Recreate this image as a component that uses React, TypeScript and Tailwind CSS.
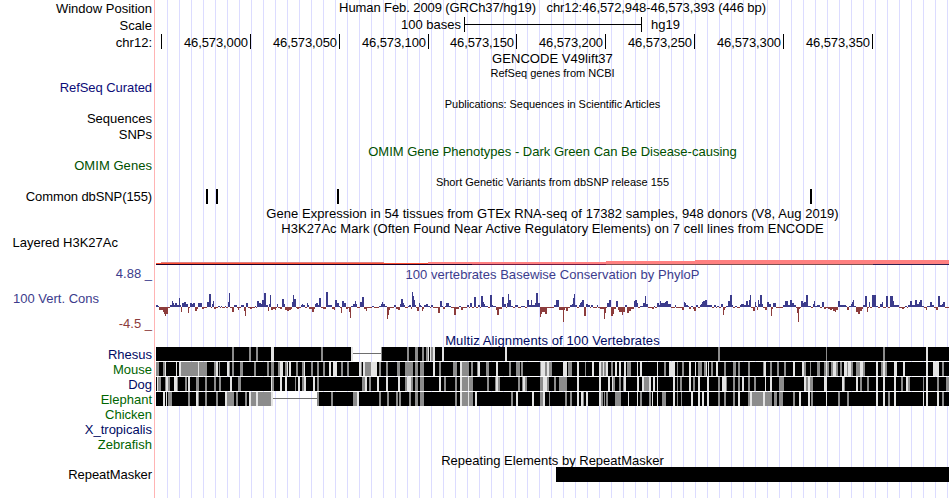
import React from 'react';

// Every track is drawn in window pixels, up to this x
const TRACK_END = 949;

const labels = [
    { name: 'Window Position', className: 'mt-px text-black' },
    { name: 'Scale', className: 'mt-[2px] text-black' },
    { name: 'chr12:', className: 'mt-[2px] text-black' },
    { name: 'RefSeq Curated', className: 'mt-[30px] tracking-[-0.07px] text-[#0c0c78]' },
    { name: 'Sequences', className: 'mt-4 text-black' },
    { name: 'SNPs', className: 'mt-px text-black' },
    { name: 'OMIM Genes', className: 'mt-4 tracking-[0.05px] text-[#005000]' },
    { name: 'Common dbSNP(155)', className: 'mt-4 tracking-[-0.1px] text-black' },
    { name: 'Layered H3K27Ac', className: 'mt-[31px] pr-[34px] text-black' },
    { name: '4.88 _', className: 'mt-4 text-[#3c3c8c]' },
    { name: '100 Vert. Cons', className: 'mt-[10px] pr-[53px] text-[#3c3c8c]' },
    { name: '-4.5 _', className: 'mt-[10px] text-[#8c3c3c]' },
    { name: 'Rhesus', className: 'mt-4 text-[#000a64]' },
    { name: 'Mouse', className: 'text-[#006400]' },
    { name: 'Dog', className: 'text-[#000a64]' },
    { name: 'Elephant', className: 'text-[#006400]' },
    { name: 'Chicken', className: 'text-[#006400]' },
    { name: 'X_tropicalis', className: 'text-[#000a64]' },
    { name: 'Zebrafish', className: 'text-[#006400]' },
    { name: 'RepeatMasker', className: 'mt-[15px] tracking-[-0.07px] text-black' },
];

const ruler = [
    { label: '46,573,000', className: 'w-[89px]' },
    { label: '46,573,050', className: 'w-[89px]' },
    { label: '46,573,100', className: 'w-[89px]' },
    { label: '46,573,150', className: 'w-[88px]' },
    { label: '46,573,200', className: 'w-[89px]' },
    { label: '46,573,250', className: 'w-[89px]' },
    { label: '46,573,300', className: 'w-[89px]' },
    { label: '46,573,350', className: 'w-[89px]' },
];

const snps = [206, 216, 337, 810];

// "x height" steps; a height holds until the next x, negative goes below zero
const phyloP = `156 2,158 1,159 -3,163 -5,164 -7,165 -9,166 -7,168 -1,170 2,172 6,173 4,174 2,175 4,177 2,179 9,180 2,181 -5,
182 4,184 5,186 3,188 -6,189 -1,190 4,192 3,193 4,195 -4,197 -2,198 4,202 -2,204 -1,207 5,209 13,211 -1,212 3,213 6,214 -2,
216 -1,218 1,220 -1,221 1,222 -1,225 1,226 -1,228 5,229 14,230 -1,232 -5,234 2,237 -1,238 -3,239 -1,241 2,244 -4,245 -9,
246 4,248 -1,250 -2,252 -1,255 1,256 -1,257 6,259 4,261 3,262 7,264 14,266 2,268 -4,269 3,270 12,271 -3,273 -2,275 -3,
276 -1,277 3,278 -1,280 -2,282 8,284 3,285 -3,287 -4,289 -3,291 -2,292 5,293 12,294 8,296 -1,297 -2,299 -1,301 2,302 3,
303 2,305 -1,307 4,308 2,309 -2,312 -5,314 -2,315 3,316 4,318 2,319 9,321 -1,323 -2,326 15,328 2,332 -2,334 -3,335 7,
337 4,339 1,340 -1,341 -6,342 6,344 4,346 -2,348 -1,349 -5,350 -11,351 1,353 3,355 6,356 3,357 -1,360 5,362 10,364 -2,
366 -4,367 -1,372 1,374 -1,379 1,381 3,382 5,383 3,385 1,387 -12,388 -8,389 -3,390 -1,394 2,396 -2,398 -3,400 3,401 8,
403 4,404 2,405 -1,408 1,409 2,411 -2,412 15,413 11,414 7,415 2,416 -1,417 -4,419 4,420 2,421 1,422 -4,423 -2,424 2,426 3,
428 1,430 -1,431 2,433 -1,438 -6,440 6,442 1,443 -2,445 1,446 4,449 1,451 -1,454 -8,456 -2,459 1,461 -3,463 -1,467 2,
469 -1,470 4,472 -1,474 10,476 -1,478 2,480 -1,481 11,483 5,484 3,485 1,488 -1,490 12,492 2,493 1,496 -3,497 -8,499 -2,
502 10,504 3,506 -1,507 4,508 13,509 7,511 1,513 -1,515 2,518 -1,521 1,525 -1,527 7,529 2,531 7,532 2,535 4,536 14,538 4,
540 -10,541 -7,542 -5,545 -7,547 -1,554 2,556 7,559 -3,563 -15,564 -3,565 -1,566 -4,568 -1,570 2,572 3,573 9,574 13,575 2,
577 -1,579 2,580 4,581 5,582 7,584 -9,586 3,588 2,590 -1,591 2,593 -1,597 2,598 -1,600 -2,604 -12,605 -6,606 -1,607 4,
609 7,611 -9,613 -7,614 -2,616 6,618 -3,619 -5,622 -8,623 -5,625 2,627 -6,629 -4,631 -2,634 6,635 7,637 4,638 -1,640 1,
643 4,645 11,646 3,648 -1,652 -2,654 1,655 -1,657 4,659 2,660 6,661 4,665 5,666 6,668 3,671 -1,675 2,676 -1,680 -1,682 -3,
684 5,685 4,686 2,688 1,689 -2,691 1,693 -2,694 -4,696 2,698 -1,700 2,701 3,702 5,703 6,705 7,707 2,712 -1,714 2,716 -1,
717 1,719 -1,721 3,723 -8,724 -3,725 -1,726 1,728 6,730 12,732 2,733 -1,735 1,737 -1,740 2,741 3,744 2,746 6,748 2,749 7,
750 12,751 -1,753 -4,755 5,756 1,757 -3,758 7,759 3,760 12,762 3,763 -1,765 -3,767 5,769 3,771 -9,772 -2,773 4,776 -1,
783 2,785 6,788 2,790 7,792 4,794 2,796 -1,797 -6,798 -15,799 -2,800 -1,801 6,803 4,804 5,806 12,808 1,811 -1,813 3,814 6,
815 1,817 2,820 -1,822 5,824 -2,826 -1,828 -2,830 -3,832 -2,833 -4,835 -5,836 -3,838 6,840 2,846 1,847 -3,849 1,851 3,
852 5,853 7,854 1,856 -5,858 -7,860 -4,862 -2,863 2,865 11,867 -5,868 -1,869 5,870 -1,872 12,876 1,878 -1,880 3,882 5,
883 -1,886 11,888 -1,890 11,893 6,894 2,899 -1,902 -2,904 -1,905 1,907 -1,908 2,910 6,912 2,915 7,917 3,919 5,920 7,922 1,
924 -1,926 -3,927 1,930 5,932 2,934 -1,936 -3,938 11,940 2,942 3,943 5,945 -1`;

// b = black, g = gray, w = light, _ = unaligned stretch; followed by x and width
const alignments = [
    `b156 197,g232 2,g249 2,g256 2,w271 3,g321 2,w351 2,_353 28,b381 568,g381 1,g407 2,g415 3,g422 2,g426 2,w428 1,w430 1,
    g431 2,w433 2,w442 2,w505 2,g718 2,g826 1,g883 2,w926 2`,
    `b156 793,g156 3,g163 2,w165 1,w176 1,w179 2,g181 26,w198 1,g214 2,w216 2,g219 1,w227 2,g229 1,g232 2,g240 3,g254 2,
    g267 2,g271 3,g278 2,w280 3,g285 2,w287 1,w289 2,g296 2,g302 2,w304 1,g311 2,g317 2,g323 2,w329 2,w333 4,g341 2,g347 2,
    w359 2,g361 1,w363 2,g365 6,w371 6,g379 2,g386 2,g397 3,g405 8,g415 3,g420 4,w433 2,g439 2,g453 4,w460 2,g462 7,g471 2,
    g477 1,w478 2,g486 3,w496 2,g509 2,g516 4,g521 2,g540 1,w541 4,g545 2,w547 2,g549 3,w563 4,g568 4,w577 2,g585 1,w592 2,
    w599 2,g601 2,w603 1,g604 2,w606 2,g611 2,w615 2,w619 2,w624 2,g627 4,w637 1,w640 2,w657 1,g664 2,w669 6,g677 1,g682 2,
    w689 2,w695 1,g698 4,g704 2,w706 1,w708 1,g711 2,w716 2,g724 2,g733 3,g738 2,g748 2,g763 1,w764 2,g770 2,g777 2,g784 2,
    w793 2,w802 2,g804 2,g810 1,g817 3,g824 2,w826 1,g827 2,g831 2,w833 3,g836 2,g840 2,w844 3,g847 1,w848 3,g851 2,g856 4,
    w860 3,g863 2,w876 2,g881 2,w883 2,g885 2,w894 3,w903 2,w926 2,w933 6,g942 2`,
    `b156 793,w157 1,g158 3,g165 1,w166 2,g168 2,w174 3,g177 1,g185 2,w188 2,g196 3,g205 2,g214 2,g219 2,w230 2,g238 3,
    w271 1,g272 2,w280 2,w285 2,g295 1,w298 2,g302 2,w304 2,w313 2,g317 2,g362 3,w365 2,g369 2,w377 2,w386 2,w398 2,g405 2,
    w407 4,g411 2,g415 3,g420 4,w439 2,g444 2,g455 2,w460 2,g462 6,w468 1,g469 4,g487 2,g495 1,w496 2,g498 2,g518 2,g522 1,
    w523 2,g525 2,g540 3,w543 4,g547 2,g554 2,g559 8,w577 2,w599 2,w608 2,w612 1,g613 2,g619 2,g623 1,w624 2,w637 2,w642 2,
    g644 5,w649 2,w653 2,w657 1,w673 2,g677 1,g680 2,w689 2,g693 2,w698 2,w707 2,g718 2,w722 4,g726 1,g733 2,g738 2,w742 2,
    g748 2,g754 2,w765 1,w770 2,g779 5,w804 2,g806 2,w808 2,g810 3,w824 3,w842 2,g844 1,w856 2,g860 2,g867 2,w876 2,w883 2,
    w894 2,g901 2,w906 2,g908 2,g923 1,w926 2,g937 2,g946 3`,
    `b156 117,w163 2,w166 1,g168 4,g188 2,w196 2,g198 1,g205 2,g216 2,w225 2,g227 7,g236 2,g245 2,w249 2,g251 5,w256 2,
    g258 13,w271 2,_273 44,b317 632,g317 2,g331 2,g353 4,w357 2,g379 2,g387 2,g396 2,g399 2,g409 2,g415 3,g420 4,g455 2,
    w460 2,g462 6,w468 1,g469 4,w475 2,g511 2,w516 2,w532 2,g540 3,w543 2,g549 1,g565 2,g570 2,w577 2,w581 2,g583 1,w586 2,
    w599 2,g601 2,g604 1,g606 2,g615 6,w628 1,w637 1,g640 2,g649 2,w652 1,w657 1,g662 4,w673 2,g677 1,g681 1,w691 2,w698 2,
    w702 2,w707 2,g718 2,g724 2,g733 2,w738 2,g748 2,w750 2,g752 20,w763 2,g774 3,g779 4,g793 2,w799 2,w808 2,g811 2,w826 1,
    g838 2,g847 2,w876 2,w883 2,g888 2,w894 2,w923 1,w926 2,w937 2,g942 2`,
];

const blockColors: Record<string, string> = { b: '#000000', g: '#8c8c8c', w: '#e4e4e4' };

const Title = ({ className = '', children }: { className?: string; children: React.ReactNode }) => (
    <div className={`text-center whitespace-pre ${className}`}>{children}</div>
);

const SnpTrack = () => (
    <svg className="block" width="793" height="15" viewBox="156 0 793 15" shapeRendering="crispEdges">
        {snps.map((x) => (
            <rect key={x} x={x} y="0" width="2" height="15" />
        ))}
    </svg>
);

const H3K27Track = () => (
    <svg className="mt-6 block" width="793" height="5" viewBox="156 0 793 5" shapeRendering="crispEdges">
        <rect x="161" y="2" width="223" height="1" fill="#e08080" />
        <rect x="156" y="3" width="272" height="1" fill="#ff5030" />
        <rect x="428" y="2" width="178" height="2" fill="#ff8080" />
        <rect x="606" y="1" width="89" height="3" fill="#ff8080" />
        <rect x="695" y="0" width="254" height="4" fill="#ff8080" />
        <rect x="156" y="4" width="316" height="1" fill="#200028" />
        <rect x="472" y="4" width="134" height="1" fill="#701840" />
        <rect x="606" y="4" width="267" height="1" fill="#805050" />
        <rect x="873" y="4" width="76" height="1" fill="#302050" />
    </svg>
);

const PhyloPTrack = () => {
    const steps = phyloP.split(',').map((s) => s.trim().split(' ').map(Number));
    return (
        <svg className="mt-2 block" width="793" height="34" viewBox="156 0 793 34" shapeRendering="crispEdges">
            {steps.map(([x, h], i) => {
                const end = i + 1 < steps.length ? steps[i + 1][0] : TRACK_END;
                return (
                    <rect
                        key={i}
                        x={x}
                        y={h > 0 ? 17 - h : 17}
                        width={end - x}
                        height={Math.abs(h)}
                        fill={h > 0 ? '#3c3c8c' : '#8c3c3c'}
                    />
                );
            })}
        </svg>
    );
};

const AlignmentRow = ({ data }: { data: string }) => {
    const blocks = data.split(',').map((s) => {
        const block = s.trim();
        const [x, width] = block.slice(1).split(' ').map(Number);
        return { kind: block[0], x, width };
    });
    return (
        <svg className="block" width="793" height="14" viewBox="156 0 793 14" shapeRendering="crispEdges">
            {blocks.map(({ kind, x, width }, i) =>
                kind === '_' ? (
                    <rect key={i} x={x} y="6" width={width} height="1" fill="#6e6e6e" />
                ) : (
                    <rect key={i} x={x} y="0" width={width} height="14" fill={blockColors[kind]} />
                )
            )}
        </svg>
    );
};

export default function App() {
    return (
        <div className="flex h-[498px] w-[950px] overflow-hidden bg-white font-['Liberation_Sans',Arial,sans-serif] text-[13px] leading-[15px] text-black">
            <aside className="flex w-[155px] shrink-0 flex-col items-end border-r border-[#ffb4b4] pr-[2px] whitespace-pre">
                {labels.map(({ name, className }) => (
                    <div key={name} className={className}>{name}</div>
                ))}
            </aside>

            <main className="ml-px w-[793px] shrink-0 bg-[repeating-linear-gradient(to_right,transparent_0px_11px,#dcdcff_11px_12px)]">
                <Title className="tracking-[-0.09px]">{'Human Feb. 2009 (GRCh37/hg19)   chr12:46,572,948-46,573,393 (446 bp)'}</Title>

                <div className="mt-[2px] flex h-[15px]">
                    <span className="w-[305px] text-right">100 bases</span>
                    <div className="ml-[3px] flex w-[178px] items-center border-x border-black">
                        <div className="h-px w-full bg-black" />
                    </div>
                    <span className="ml-[9px]">hg19</span>
                </div>

                <div className="mt-[2px] flex h-[15px]">
                    <div className="w-[6px] border-r border-black" />
                    {ruler.map(({ label, className }) => (
                        <div key={label} className={`border-r border-black pt-px pr-[2px] text-right tracking-[-0.1px] ${className}`}>{label}</div>
                    ))}
                </div>

                <Title className="mt-[2px] tracking-[0.05px]">GENCODE V49lift37</Title>
                <Title className="mt-px text-[11px] leading-[13px]">RefSeq genes from NCBI</Title>
                <Title className="mt-[18px] text-[11px] leading-[13px] tracking-[-0.05px]">Publications: Sequences in Scientific Articles</Title>
                <Title className="mt-[33px] text-[#005000]">OMIM Gene Phenotypes - Dark Green Can Be Disease-causing</Title>
                <Title className="mt-[17px] text-[11px] leading-[13px]">Short Genetic Variants from dbSNP release 155</Title>
                <SnpTrack />

                <Title className="mt-[2px] tracking-[0.057px]">Gene Expression in 54 tissues from GTEx RNA-seq of 17382 samples, 948 donors (V8, Aug 2019)</Title>
                <Title className="tracking-[0.055px]">H3K27Ac Mark (Often Found Near Active Regulatory Elements) on 7 cell lines from ENCODE</Title>
                <H3K27Track />

                <Title className="mt-[2px] tracking-[0.04px] text-[#3c3c8c]">100 vertebrates Basewise Conservation by PhyloP</Title>
                <PhyloPTrack />

                <Title className="mt-[9px] h-[14px] tracking-[0.1px] text-[#000a64]">Multiz Alignments of 100 Vertebrates</Title>
                <div className="flex flex-col gap-px">
                    {alignments.map((data, i) => (
                        <AlignmentRow key={i} data={data} />
                    ))}
                </div>

                <Title className="mt-[47px] h-[14px]">Repeating Elements by RepeatMasker</Title>
                <div className="ml-[400px] h-[15px] bg-black" />
            </main>
        </div>
    );
}
